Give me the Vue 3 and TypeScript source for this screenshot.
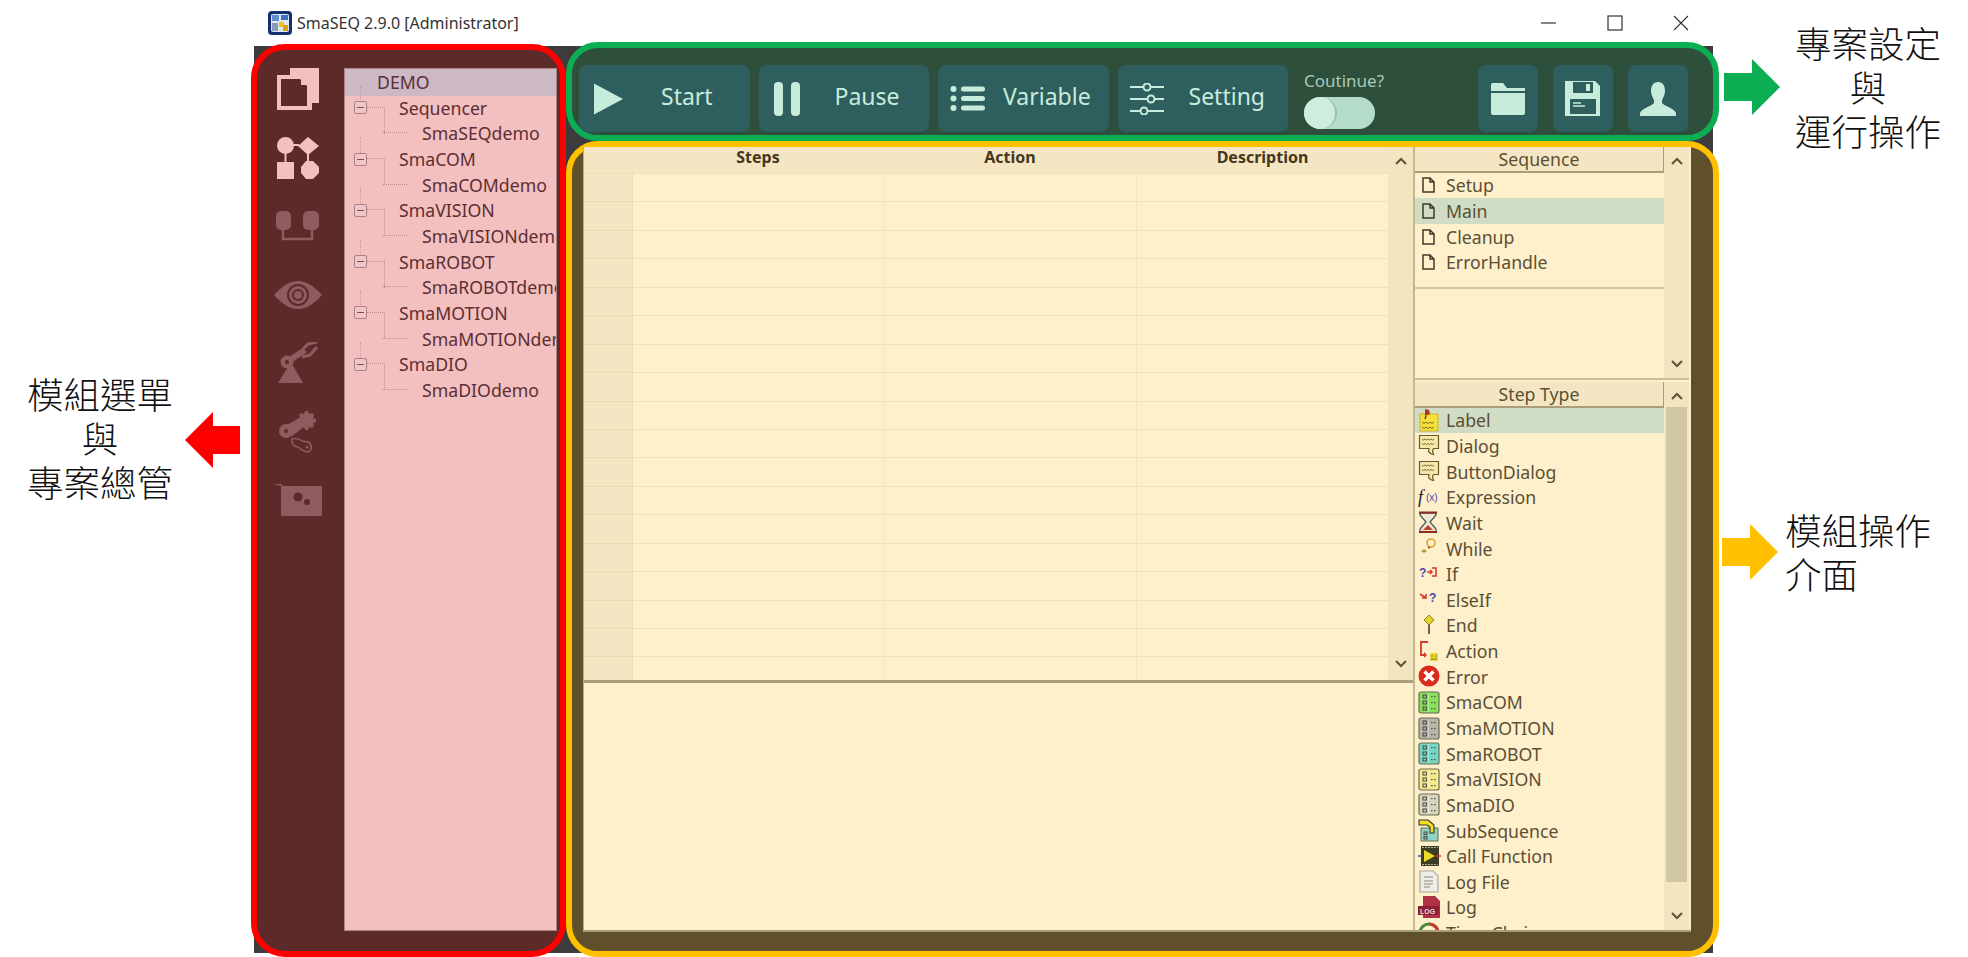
<script setup lang="ts">
const modules = [
  { name: "Sequencer", child: "SmaSEQdemo" },
  { name: "SmaCOM", child: "SmaCOMdemo" },
  { name: "SmaVISION", child: "SmaVISIONdemo" },
  { name: "SmaROBOT", child: "SmaROBOTdemo" },
  { name: "SmaMOTION", child: "SmaMOTIONdemo" },
  { name: "SmaDIO", child: "SmaDIOdemo" },
];

const columns = ["", "Steps", "Action", "Description"];
const rowCount = 18;

const sequences = ["Setup", "Main", "Cleanup", "ErrorHandle"];

// 模組卡片小圖示，只差顏色
function chip(fill: string, stroke = "#6b6b55") {
  return `<rect x="1" y="1" width="20" height="21" rx="2" fill="${fill}" stroke="${stroke}" stroke-width="1.2"/>
    <path d="M10.5 2v19" stroke="#fff" stroke-opacity=".35"/>
    <g fill="none" stroke="#444" stroke-width="1"><rect x="5" y="4" width="3.4" height="3"/><rect x="5" y="10" width="3.4" height="3"/><rect x="5" y="16" width="3.4" height="3"/></g>
    <g fill="#555"><rect x="13" y="5" width="1.6" height="1.2"/><rect x="16" y="5" width="1.6" height="1.2"/><rect x="13" y="11" width="1.6" height="1.2"/><rect x="16" y="11" width="1.6" height="1.2"/><rect x="13" y="17" width="1.6" height="1.2"/><rect x="16" y="17" width="1.6" height="1.2"/></g>`;
}

const dialog = `<path d="M1.5 1.5h19v13h-5l-1 2 1 4-3-1-2-2 .5-3h-9.500z" fill="#f6e7a8" stroke="#6a5a30" stroke-width="1.2"/>
  <path d="M4 5l1.500 1 1.500-1 1.500 1 1.500-1 1.500 1 1.500-1 1.500 1 1.500-1M4 9.500l1.500 1 1.500-1 1.500 1 1.500-1 1.500 1 1.500-1 1.500 1 1.500-1" fill="none" stroke="#7a6a3a"/>`;

const icons: Record<string, string> = {
  label: `<rect x="2" y="5" width="18" height="17" fill="#f4e23a" stroke="#c9b52a"/><path d="M7 0l4 1 1 4-5 2z" fill="#b5352a"/><path d="M8 7l-1 3" stroke="#7c2a20" stroke-width="1.4"/><path d="M4 13l2 1.5 2-1.5 2 1.5 2-1.5 2 1.5 2-1.5M4 18l2 1.5 2-1.5 2 1.5 2-1.5 2 1.5 2-1.5" fill="none" stroke="#7a6a20"/>`,
  dialog,
  expr: `<text x="0" y="17" font-family="Liberation Serif, serif" font-style="italic" font-size="18" fill="#222">f</text><text x="8" y="15" font-family="Liberation Sans, sans-serif" font-size="10" fill="#4a4aa8">(x)</text>`,
  wait: `<path d="M2 2h16v2l-6 7 6 7v3H2v-3l6-7-6-7z" fill="#eee7d2" stroke="#555" stroke-width="1.3"/><path d="M1 1.5h18M1 21h18" stroke="#8c2b20" stroke-width="2"/><path d="M5 19l5-5 5 5z" fill="#b5472f"/>`,
  while: `<circle cx="13" cy="6" r="4" fill="none" stroke="#d6a52a" stroke-width="1.6"/><path d="M12 10l-2 1" stroke="#c53d2e" stroke-width="1.4"/><path d="M3 14l3-2 3 2-3 2z" fill="#a6a23a"/>`,
  if: `<text x="1" y="14" font-family="Liberation Sans, sans-serif" font-size="12" font-weight="700" fill="#4848b0">?</text><path d="M9 9h5M14 5h4v8h-4M12 7l2 2-2 2" fill="none" stroke="#d8392b" stroke-width="1.6"/>`,
  elseif: `<path d="M2 6l6 4M8 6v4H4" fill="none" stroke="#d8392b" stroke-width="1.6"/><text x="11" y="14" font-family="Liberation Sans, sans-serif" font-size="12" font-weight="700" fill="#4848b0">?</text>`,
  end: `<path d="M11 1l5 5-5 5-5-5z" fill="#e4d428" stroke="#8a8420"/><path d="M11 11v9" stroke="#333" stroke-width="1.5"/>`,
  action: `<path d="M10 2H3v13h4" fill="none" stroke="#d8392b" stroke-width="1.8"/><path d="M6 12l3 3-3 3z" fill="#d8392b"/><rect x="12" y="13" width="8" height="8" fill="#e9d83a"/><path d="M13 16h2M17 16h2M13 19h6" stroke="#8a7a20"/>`,
  error: `<circle cx="11" cy="11" r="10.5" fill="#dc2a1c"/><path d="M6.500 6.500l9 9M15.500 6.500l-9 9" stroke="#fff" stroke-width="3.4"/>`,
  com: chip("#86e25a"),
  motion: chip("#b9b5a8"),
  robot: chip("#72d8c4"),
  vision: chip("#f4ea8a"),
  dio: chip("#d9d4bc"),
  sub: `<rect x="3" y="9" width="17" height="13" fill="#8ed6c4" stroke="#6b6b55"/><g fill="none" stroke="#444"><rect x="6" y="13" width="3" height="2.5"/><rect x="6" y="17.500" width="3" height="2.5"/></g><path d="M1 1h9l6 5v8h-4V8l-3-2H1z" fill="#f0e01e" stroke="#333" stroke-width="1.1"/>`,
  call: `<rect x="3" y="1" width="18" height="20" fill="#3f3a22"/><path d="M4 2.500h16M4 19.500h16" stroke="#b8b090" stroke-dasharray="2 1"/><path d="M6 5l11 6-11 6z" fill="#e8de28"/><path d="M0 11h4" stroke="#3b4fc0" stroke-width="1.6"/><path d="M18 11h5" stroke="#d8392b" stroke-width="1.6"/>`,
  logfile: `<path d="M2 1h13l5 5v16H2z" fill="#efeee6" stroke="#a8a8a0" stroke-width="1.2"/><path d="M6 7h9M6 11h9M6 14h9M6 17h6" stroke="#8a8a84" stroke-width="1.2"/>`,
  log: `<path d="M5 0h12l5 5v17H5z" fill="#b03048"/><rect x="0" y="10" width="21" height="9" fill="#8e1f38"/><text x="2" y="17.5" font-family="Liberation Sans, sans-serif" font-size="7" font-weight="700" fill="#f5d8d8">LOG</text>`,
  time: `<circle cx="11" cy="11" r="9" fill="none" stroke="#4a8a3a" stroke-width="3"/><path d="M11 2a9 9 0 0 1 9 9" fill="none" stroke="#c8392b" stroke-width="3"/>`,
};

const stepTypes = [
  { name: "Label", icon: "label" },
  { name: "Dialog", icon: "dialog" },
  { name: "ButtonDialog", icon: "dialog" },
  { name: "Expression", icon: "expr" },
  { name: "Wait", icon: "wait" },
  { name: "While", icon: "while" },
  { name: "If", icon: "if" },
  { name: "ElseIf", icon: "elseif" },
  { name: "End", icon: "end" },
  { name: "Action", icon: "action" },
  { name: "Error", icon: "error" },
  { name: "SmaCOM", icon: "com" },
  { name: "SmaMOTION", icon: "motion" },
  { name: "SmaROBOT", icon: "robot" },
  { name: "SmaVISION", icon: "vision" },
  { name: "SmaDIO", icon: "dio" },
  { name: "SubSequence", icon: "sub" },
  { name: "Call Function", icon: "call" },
  { name: "Log File", icon: "logfile" },
  { name: "Log", icon: "log" },
  { name: "Time Chain", icon: "time" },
];
</script>

<template>
  <div class="page">
    <aside class="notes-left">
      <div class="note-text center">模組選單<br />與<br />專案總管</div>
      <svg class="arrow" width="55" height="56" viewBox="0 0 55 56"><path d="M0 28 28 0v14h27v28H28v14z" fill="#ff0000" /></svg>
    </aside>

    <div class="window">
      <header class="titlebar">
        <svg class="logo" width="24" height="24" viewBox="0 0 24 24">
          <rect width="24" height="24" rx="4" fill="#14306e" />
          <rect x="3" y="3" width="18" height="18" rx="2" fill="#dfe6f2" />
          <path d="M4 4h7v6H4z" fill="#5f8fd0" />
          <path d="M13 4h7v5h-7z" fill="#3f6fb8" />
          <path d="M4 12h6v8H4z" fill="#8a9ab8" />
          <path d="M11 11h5v5h-5z" fill="#f0c020" />
          <path d="M15 14h5v6h-5z" fill="#d8a018" />
        </svg>
        <span class="title">SmaSEQ 2.9.0 [Administrator]</span>
        <div class="win-controls">
          <svg width="16" height="16" viewBox="0 0 16 16"><path d="M0 8h15" stroke="#333" stroke-width="1.2" /></svg>
          <svg width="16" height="16" viewBox="0 0 16 16"><rect x="1" y="1" width="14" height="14" fill="none" stroke="#333" stroke-width="1.2" /></svg>
          <svg width="16" height="16" viewBox="0 0 16 16"><path d="M1 1l14 14M15 1 1 15" stroke="#333" stroke-width="1.1" /></svg>
        </div>
      </header>

      <main class="app">
        <section class="module-box">
          <nav class="rail">
            <div class="rail-slot">
              <svg width="42" height="42" viewBox="0 0 42 42">
                <path d="M13 0h29v35h-7v7H0V7h13z" fill="#f4bfbf" />
                <path d="M4 11h19l7 7v20H4z" fill="#5d2a2a" />
                <path d="M24 11l6 6h-6z" fill="#f4bfbf" />
              </svg>
            </div>
            <div class="rail-slot">
              <svg width="42" height="42" viewBox="0 0 42 42" fill="#f4bfbf">
                <circle cx="8.5" cy="8.5" r="8.5" />
                <path d="M31 0l11 9-11 9-10-9z" />
                <rect x="0" y="25" width="17" height="17" />
                <path d="M29 24h7l6 6v6l-6 6h-7l-5-6v-6z" />
                <path d="M8.500 16v10M16 8h6M31 16v9" stroke="#f4bfbf" stroke-width="2" />
              </svg>
            </div>
            <div class="rail-slot dim">
              <svg width="43" height="31" viewBox="0 0 43 31" fill="#8f5b5e">
                <rect x="0" y="0" width="15" height="19" rx="5" />
                <rect x="27" y="0" width="16" height="19" rx="5" />
                <path d="M7 18v10h29V18" fill="none" stroke="#8f5b5e" stroke-width="2.5" />
              </svg>
            </div>
            <div class="rail-slot dim">
              <svg width="48" height="28" viewBox="0 0 48 28">
                <path d="M0 14C10 3 17 0 24 0s14 3 24 14c-10 11-17 14-24 14S10 25 0 14z" fill="#8f5b5e" />
                <circle cx="24" cy="14" r="11" fill="#5d2a2a" />
                <circle cx="24" cy="14" r="9" fill="#8f5b5e" />
                <circle cx="24" cy="14" r="6" fill="#5d2a2a" />
                <circle cx="24" cy="14" r="4" fill="#8f5b5e" />
              </svg>
            </div>
            <div class="rail-slot dim">
              <svg width="40" height="42" viewBox="0 0 40 42" fill="#8f5b5e">
                <path d="M0 41 13 20l12 21z" />
                <path d="M9 20 27 8" fill="none" stroke="#8f5b5e" stroke-width="6" />
                <circle cx="9" cy="20" r="6.500" />
                <circle cx="9" cy="20" r="2" fill="#5d2a2a" />
                <path d="M25 7l5-5 9-2M24 15l8-2 7-8" fill="none" stroke="#8f5b5e" stroke-width="3" />
              </svg>
            </div>
            <div class="rail-slot dim">
              <svg width="38" height="42" viewBox="0 0 38 42" fill="#8f5b5e">
                <circle cx="7" cy="20" r="7" />
                <path d="M8 14l14-8 4 9-14 11z" />
                <path d="M26 0h3l1 3 3-1 2 2-1 3 3 1v3l-3 1 1 3-2 2-3-1-1 3h-3l-1-3-3 1-2-2 1-3-3-1V8l3-1-1-3 2-2 3 1z" />
                <circle cx="7" cy="20" r="2" fill="#5d2a2a" />
                <path d="M13 28c3-1 7 0 10 2l6 1a5.500 5.500 0 0 1 0 10c-4 0-7-3-10-5-3 0-7-3-6-8z" fill="none" stroke="#8f5b5e" stroke-width="1.5" />
                <circle cx="28" cy="36" r="1.5" />
              </svg>
            </div>
            <div class="rail-slot dim">
              <svg width="49" height="32" viewBox="0 0 49 32" fill="#8f5b5e">
                <path d="M0 0h8l2 2H8z" />
                <rect x="8" y="2" width="41" height="30" rx="1" />
                <circle cx="25" cy="13" r="4.500" fill="#5d2a2a" />
                <circle cx="34" cy="18" r="3" fill="#5d2a2a" />
              </svg>
            </div>
          </nav>

          <div class="tree">
            <div class="tree-root">DEMO</div>
            <div v-for="m in modules" :key="m.name" class="tree-group">
              <span class="expander"></span>
              <div class="tree-row level-1">{{ m.name }}</div>
              <div class="tree-row level-2">{{ m.child }}</div>
            </div>
          </div>
        </section>

        <div class="right-col">
          <section class="toolbar">
            <button class="btn wide">
              <svg width="29" height="34" viewBox="0 0 29 34"><path d="M0 1.5v31L29 17z" fill="#c8ecdc" /></svg>
              <span class="start-label">Start</span>
            </button>
            <button class="btn wide">
              <svg width="26" height="34" viewBox="0 0 26 34" fill="#c8ecdc"><rect width="9" height="34" rx="4" /><rect x="17" width="9" height="34" rx="4" /></svg>
              <span class="pause-label">Pause</span>
            </button>
            <button class="btn wide tight">
              <svg width="35" height="25" viewBox="0 0 35 25" fill="#c8ecdc">
                <circle cx="3.5" cy="3" r="3" /><circle cx="3.5" cy="12.5" r="3" /><circle cx="3.5" cy="22" r="3" />
                <rect x="11" y="0.5" width="24" height="5" rx="2.5" /><rect x="11" y="10" width="24" height="5" rx="2.5" /><rect x="11" y="19.5" width="24" height="5" rx="2.5" />
              </svg>
              <span class="var-label">Variable</span>
            </button>
            <button class="btn wide tight">
              <svg width="34" height="32" viewBox="0 0 34 32" fill="none" stroke="#c8ecdc" stroke-width="2">
                <path d="M0 4h13M21 4h13M0 16h17M25 16h9M0 28h10M18 28h16" />
                <circle cx="17" cy="4" r="3.5" /><circle cx="21" cy="16" r="3.5" /><circle cx="14" cy="28" r="3.5" />
              </svg>
              <span class="set-label">Setting</span>
            </button>

            <div class="continue">
              <span class="continue-label">Coutinue?</span>
              <span class="toggle"><span class="knob"></span></span>
            </div>

            <div class="tool-right">
              <button class="btn square">
                <svg width="34" height="32" viewBox="0 0 34 32" fill="#c8ecdc">
                  <path d="M0 2a2 2 0 0 1 2-2h10l4 5h18v3H0z" />
                  <path d="M0 10h34v20a2 2 0 0 1-2 2H2a2 2 0 0 1-2-2z" />
                </svg>
              </button>
              <button class="btn square">
                <svg width="35" height="35" viewBox="0 0 35 35">
                  <path d="M0 0h30l5 5v30H0z" fill="#c8ecdc" />
                  <rect x="8" y="1" width="20" height="11" fill="#2f5e5e" />
                  <rect x="21" y="3" width="4" height="7" fill="#c8ecdc" />
                  <rect x="5" y="18" width="26" height="15" fill="#2f5e5e" />
                  <path d="M8 22h8M8 25h12" stroke="#c8ecdc" stroke-width="1.5" />
                </svg>
              </button>
              <button class="btn square">
                <svg width="36" height="34" viewBox="0 0 36 34" fill="#c8ecdc">
                  <path d="M18 0c5 0 7 4 7 9 0 4-2 7-3 9v3c2 3 12 5 14 10v3H0v-3c2-5 12-7 14-10v-3c-1-2-3-5-3-9 0-5 2-9 7-9z" />
                </svg>
              </button>
            </div>
          </section>

          <section class="operate-box">
            <div class="panel">
              <div class="main-area">
                <div class="table-wrap">
                  <div class="grid-table">
                    <div v-for="(c, i) in columns" :key="i" class="cell head">{{ c }}</div>
                    <template v-for="r in rowCount" :key="r">
                      <div class="cell row-head"></div>
                      <div class="cell"></div>
                      <div class="cell"></div>
                      <div class="cell"></div>
                    </template>
                  </div>
                  <div class="scrollbar table-bar">
                    <svg width="12" height="8" viewBox="0 0 12 8"><path d="M1 7l5-5 5 5" fill="none" stroke="#5d5338" stroke-width="2" /></svg>
                    <svg width="12" height="8" viewBox="0 0 12 8"><path d="M1 1l5 5 5-5" fill="none" stroke="#5d5338" stroke-width="2" /></svg>
                  </div>
                </div>
                <div class="editor"></div>
              </div>

              <div class="side">
                <div class="seq-block">
                  <div class="list-body">
                    <div class="list-head">Sequence</div>
                    <div class="seq-items">
                      <div v-for="s in sequences" :key="s" class="list-item" :class="{ selected: s === 'Main' }">
                        <svg class="doc" width="13" height="16" viewBox="0 0 13 16"><path d="M1 1h7l4 4v10H1zM8 1v4h4" fill="none" stroke="#3f3a28" stroke-width="1.5" /></svg>
                        <span>{{ s }}</span>
                      </div>
                    </div>
                  </div>
                  <div class="scrollbar">
                    <svg width="12" height="8" viewBox="0 0 12 8"><path d="M1 7l5-5 5 5" fill="none" stroke="#5d5338" stroke-width="2" /></svg>
                    <svg width="12" height="8" viewBox="0 0 12 8"><path d="M1 1l5 5 5-5" fill="none" stroke="#5d5338" stroke-width="2" /></svg>
                  </div>
                </div>

                <div class="step-block">
                  <div class="list-body">
                    <div class="list-head">Step Type</div>
                    <div class="step-items">
                      <div v-for="s in stepTypes" :key="s.name" class="list-item" :class="{ selected: s.name === 'Label' }">
                        <svg class="step-icon" width="23" height="23" viewBox="0 0 23 23" v-html="icons[s.icon]"></svg>
                        <span>{{ s.name }}</span>
                      </div>
                    </div>
                  </div>
                  <div class="scrollbar">
                    <svg width="12" height="8" viewBox="0 0 12 8"><path d="M1 7l5-5 5 5" fill="none" stroke="#5d5338" stroke-width="2" /></svg>
                    <span class="thumb"></span>
                    <svg width="12" height="8" viewBox="0 0 12 8"><path d="M1 1l5 5 5-5" fill="none" stroke="#5d5338" stroke-width="2" /></svg>
                  </div>
                </div>
              </div>
            </div>
          </section>
        </div>
      </main>
    </div>

    <aside class="notes-right">
      <div class="note green-note">
        <svg class="arrow" width="56" height="56" viewBox="0 0 56 56"><path d="M0 14h28V0l28 28-28 28V42H0z" fill="#0bae52" /></svg>
        <div class="note-text center">專案設定<br />與<br />運行操作</div>
      </div>
      <div class="note yellow-note">
        <svg class="arrow" width="56" height="56" viewBox="0 0 56 56"><path d="M0 14h28V0l28 28-28 28V42H0z" fill="#ffc000" /></svg>
        <div class="note-text">模組操作<br />介面</div>
      </div>
    </aside>
  </div>
</template>

<style>
html, body { background: #fff; overflow: hidden; }
</style>

<style scoped>
* { box-sizing: border-box; }

.page {
  width: 1968px;
  height: 957px;
  display: grid;
  grid-template-columns: 251px 1466px 251px;
  font-family: "Noto Sans", "Open Sans", sans-serif;
  overflow: hidden;
}

/* 註解文字 */
.note-text {
  font-family: "Noto Sans CJK TC", sans-serif;
  font-size: 36.5px;
  font-weight: 300;
  line-height: 44px;
  color: #111;
  white-space: nowrap;
}
.center { text-align: center; }
.arrow { flex: none; display: block; }

.notes-left {
  display: flex;
  align-items: center;
  align-self: start;
  padding: 371.5px 0 0 20px;
}
.notes-left .note-text { width: 160px; margin: 0 5px 5px 0; }

.notes-right { padding-top: 21px; }
.note { display: flex; align-items: center; }
.green-note { padding-left: 7px; }
.green-note .note-text { width: 146px; margin-left: 15px; }
.yellow-note { padding-left: 5px; margin-top: 355px; }
.yellow-note .note-text { margin-left: 7px; }

/* 標題列 */
.titlebar {
  height: 42px;
  display: flex;
  align-items: flex-start;
  padding: 11px 0 0 17px;
  color: #333;
}
.logo { flex: none; }
.title { margin-left: 5px; font-size: 16px; line-height: 25px; }
.win-controls {
  margin-left: auto;
  width: 148px;
  margin-right: 28px;
  padding-top: 4px;
  display: flex;
  justify-content: space-between;
}

/* 主視窗 */
.app {
  position: relative;
  height: 915px;
  display: flex;
}
.app::before {
  content: "";
  position: absolute;
  inset: 4px 4px 4px 3px;
  background: #3c3c3c;
}

.module-box {
  position: relative;
  flex: none;
  width: 315px;
  margin: 2px -2px 0 0;
  display: flex;
  background: #5d2a2a;
  border: 6px solid #ff0000;
  border-radius: 34px;
  z-index: 1;
}
.rail {
  flex: none;
  width: 81px;
  padding-top: 5px;
  margin-right: 6px;
}
.rail-slot {
  height: 68.5px;
  display: flex;
  align-items: center;
  justify-content: center;
}

.tree {
  flex: none;
  width: 213px;
  margin: 18px 0 20px;
  background: #f4bfbf;
  border: 1px solid #ad8484;
  color: #5c2f33;
  font-size: 17.7px;
  overflow: hidden;
  white-space: nowrap;
}
.tree-root {
  height: 26.8px;
  line-height: 27px;
  padding-left: 32px;
  background: #cdb8c6;
}
.tree-group { position: relative; }
.tree-group::before {
  content: "";
  position: absolute;
  left: 15px;
  top: -10px;
  height: 26px;
  border-left: 1px dotted #c99a9a;
}
.tree-group:first-of-type::before { top: 0; height: 5px; }
.tree-row {
  height: 25.65px;
  line-height: 25px;
  position: relative;
}
.level-1 { padding-left: 54px; }
.level-2 { padding-left: 77px; }
.level-1::before {
  content: "";
  position: absolute;
  left: 22px;
  top: 11px;
  width: 17px;
  height: 26px;
  border-top: 1px dotted #b98c8c;
  border-right: 1px dotted #b98c8c;
}
.level-2::before {
  content: "";
  position: absolute;
  left: 38px;
  top: 11px;
  width: 24px;
  border-top: 1px dotted #b98c8c;
}
.expander {
  position: absolute;
  left: 9px;
  top: 5.5px;
  width: 13px;
  height: 13px;
  border: 1px solid #ad7f85;
  border-radius: 2px;
  background: #f0c6c9;
  z-index: 1;
}
.expander::after {
  content: "";
  position: absolute;
  left: 2px;
  right: 2px;
  top: 5px;
  height: 1px;
  background: #7c4a4f;
}

.right-col {
  position: relative;
  flex: none;
  width: 1153px;
  margin-left: 2px;
  display: flex;
  flex-direction: column;
  z-index: 2;
}

/* 工具列 */
.toolbar {
  height: 99px;
  display: flex;
  align-items: flex-start;
  gap: 9px;
  padding: 17px 25px 0 7px;
  background: #2f4f3d;
  border: 6px solid #0bae52;
  border-radius: 32px;
}
.btn {
  height: 67px;
  display: flex;
  align-items: center;
  padding: 0;
  background: #2f5e5e;
  border: 0;
  border-radius: 8px;
  color: #c8ecdc;
  font-family: inherit;
  font-size: 23px;
}
.btn span { margin-bottom: 5px; }
.wide { width: 170.5px; padding-left: 15px; }
.wide.tight { padding-left: 12px; }
.square { width: 60.5px; justify-content: center; }
.start-label { margin-left: 38px; }
.pause-label { margin-left: 35px; }
.var-label { margin-left: 18px; }
.set-label { margin-left: 25px; }

.continue {
  margin: 5px 0 0 7px;
  display: flex;
  flex-direction: column;
  align-items: flex-start;
}
.continue-label {
  font-size: 17px;
  line-height: 22px;
  color: #a9c9b9;
  white-space: nowrap;
}
.toggle {
  margin-top: 5px;
  width: 71px;
  height: 32px;
  border-radius: 16px;
  background: #b5dcc8;
  display: block;
}
.knob {
  display: block;
  width: 33px;
  height: 32px;
  border-radius: 50%;
  background: #cdeede;
  border-right: 2px solid #9dbfae;
}
.tool-right {
  margin-left: auto;
  display: flex;
  gap: 14.5px;
}

/* 操作介面 */
.operate-box {
  height: 816px;
  padding: 0 22px 19px 11px;
  background: #5f4f2b;
  border: 6px solid #ffc000;
  border-radius: 32px;
}
.panel {
  height: 100%;
  display: flex;
  background: #fff0cc;
  color: #5b4f35;
  font-size: 17.7px;
  border-left: 1px solid #b8ae8a;
  border-bottom: 2px solid #a89e78;
}

.main-area {
  flex: none;
  width: 829px;
  display: flex;
  flex-direction: column;
}
.table-wrap {
  height: 536px;
  display: flex;
  border-bottom: 3px solid #a89e78;
  overflow: hidden;
}
.grid-table {
  flex: none;
  width: 805px;
  display: grid;
  grid-template-columns: 49px 251px 253px 252px;
  grid-auto-rows: 28.45px;
  grid-template-rows: 27px;
  align-content: start;
}
.cell {
  border-right: 1px solid #f3e5c2;
  border-bottom: 1px solid #efe0ba;
}
.head {
  background: #f5e6c3;
  color: #44361c;
  font-weight: 700;
  font-size: 16px;
  line-height: 21px;
  text-align: center;
}
.row-head {
  background: #f5e6c3;
  border-right-color: #ebdcb6;
  border-bottom-color: #ebdcb6;
}
.scrollbar {
  flex: none;
  width: 25px;
  display: flex;
  flex-direction: column;
  justify-content: space-between;
  align-items: center;
  background: #f3e5c0;
  padding: 10px 0;
  position: relative;
}
.table-bar { width: 24px; padding-bottom: 12px; }
.editor { flex: 1; }

.side {
  flex: none;
  width: 276px;
  display: flex;
  flex-direction: column;
  border-left: 2px solid #c2b993;
}
.seq-block {
  flex: none;
  height: 233px;
  display: flex;
  border-bottom: 2px solid #c9bf9a;
}
.step-block {
  flex: 1;
  min-height: 0;
  display: flex;
  padding-top: 2px;
}
.list-body {
  flex: 1;
  min-width: 0;
  display: flex;
  flex-direction: column;
  overflow: hidden;
}
.list-head {
  flex: none;
  height: 25.5px;
  line-height: 24px;
  text-align: center;
  background: #f5e6c3;
  border-right: 1px solid #a89e78;
  border-bottom: 2px solid #a89e78;
}
.seq-items {
  padding-bottom: 12px;
  border-bottom: 2px solid #cfc5a0;
}
.step-items { flex: 1; min-height: 0; overflow: hidden; }
.list-item {
  height: 25.65px;
  display: flex;
  align-items: center;
  white-space: nowrap;
}
.list-item.selected { background: #d1dcc4; }
.doc { margin: 0 11px 0 7px; flex: none; }
.step-icon { margin: 0 5px 0 3px; flex: none; overflow: visible; }
.thumb {
  position: absolute;
  left: 2px;
  right: 2px;
  top: 25px;
  height: 475px;
  background: #d2c7a4;
}
</style>
